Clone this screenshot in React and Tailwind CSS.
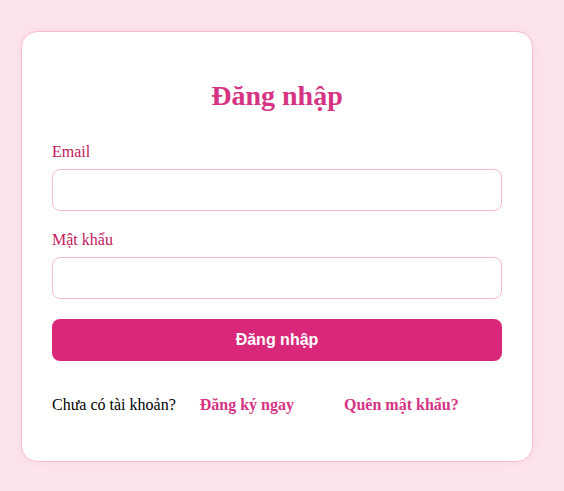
import React, { useState } from 'react';

export default function App() {
   const [email, setEmail] = useState('');
   const [password, setPassword] = useState('');

   return (
      <div
         className="min-h-screen w-full bg-[#fce4ec] pl-[21px] pt-[31px]"
         style={{ fontFamily: '"Liberation Serif", "DejaVu Serif", serif' }}
      >
         <div className="w-[512px] h-[431px] bg-white border border-[#f8bbd0] rounded-[16px] shadow-[0_0_12px_rgba(236,72,153,0.08)] px-[30px] pt-[30px]">
            {/* Title */}
            <h2 className="mt-[16px] text-center text-[28px] leading-[36px] font-bold text-[#d63384]">Đăng nhập</h2>

            <form onSubmit={(e) => e.preventDefault()} className="mt-[26px]">
               {/* Email Field */}
               <label className="block text-[16px] leading-[24px] text-[#c2185b]">Email</label>
               <input
                  type="email"
                  value={email}
                  onChange={(e) => setEmail(e.target.value)}
                  className="mt-[5px] block w-[450px] h-[42px] px-3 border border-[#f8bbd0] rounded-[8px] focus:outline-none"
               />

               {/* Password Field */}
               <label className="mt-[17px] block text-[16px] leading-[24px] text-[#c2185b]">Mật khẩu</label>
               <input
                  type="password"
                  value={password}
                  onChange={(e) => setPassword(e.target.value)}
                  className="mt-[5px] block w-[450px] h-[42px] px-3 border border-[#f8bbd0] rounded-[8px] focus:outline-none"
               />

               {/* Login Button */}
               <button
                  type="submit"
                  className="mt-[20px] block w-[450px] h-[42px] bg-[#d9287a] text-white text-[16px] font-bold rounded-[8px]"
                  style={{ fontFamily: '"Liberation Sans", Arial, sans-serif' }}
               >
                  Đăng nhập
               </button>
            </form>

            <div className="mt-[32px] flex items-center text-[16px] leading-[24px]">
               <span className="text-black">Chưa có tài khoản?</span>
               <a href="#" className="ml-[24px] font-bold text-[#d63384]">Đăng ký ngay</a>
               <a href="#" className="ml-[50px] font-bold text-[#d63384]">Quên mật khẩu?</a>
            </div>
         </div>
      </div>
   );
}
